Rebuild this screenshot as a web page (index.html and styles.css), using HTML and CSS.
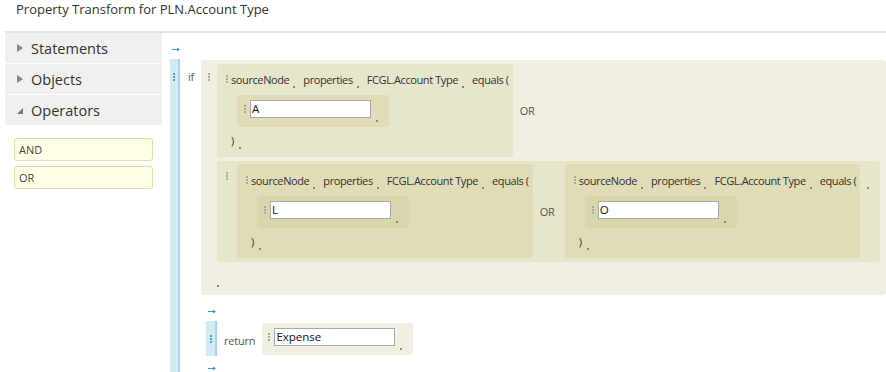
FILE: index.html
```html
<!DOCTYPE html>
<html>
<head>
<meta charset="utf-8">
<link rel="stylesheet" href="styles.css">
</head>
<body>
<div class="title">Property Transform for PLN.Account Type</div>
<div class="main">
  <aside class="side">
    <div class="cat"><span class="tri-r"></span>Statements</div>
    <div class="cat"><span class="tri-r"></span>Objects</div>
    <div class="cat"><span class="tri-d"></span>Operators</div>
    <div class="ops">
      <div class="op">AND</div>
      <div class="op">OR</div>
    </div>
  </aside>
  <section class="editor">
    <div class="arrow-row top"><svg class="arrow" width="8" height="5" viewBox="0 0 8 5"><path d="M0 2.5H6" stroke="#3a9bd5" stroke-width="1"/><path d="M5 0.5L8 2.5L5 4.5Z" fill="#3a9bd5"/></svg></div>
    <div class="if-stmt">
      <div class="bar"><span class="grip blue"></span></div>
      <div class="stmt-body">
        <div class="if-row">
          <span class="kw if">if</span>
          <div class="blk l1 or-outer">
            <span class="grip"></span>
            <div class="rows">
              <div class="row">
                <div class="blk l2 eq">
                  <span class="grip"></span>
                  <div class="eq-body">
                    <div class="line"><span class="tok">sourceNode</span><span class="dot"></span><span class="tok">properties</span><span class="dot"></span><span class="tok">FCGL.Account Type</span><span class="dot"></span><span class="tok last">equals (</span></div>
                    <div class="val l3"><span class="grip"></span><span class="input">A</span><span class="dot"></span></div>
                    <div class="line close"><span class="tok">)</span><span class="dot"></span></div>
                  </div>
                </div>
                <span class="kw or">OR</span>
              </div>
              <div class="blk l2 or-inner">
                <span class="grip"></span>
                <div class="blk l3 eq">
                  <span class="grip"></span>
                  <div class="eq-body">
                    <div class="line"><span class="tok">sourceNode</span><span class="dot"></span><span class="tok">properties</span><span class="dot"></span><span class="tok">FCGL.Account Type</span><span class="dot"></span><span class="tok last">equals (</span></div>
                    <div class="val l4"><span class="grip"></span><span class="input">L</span><span class="dot"></span></div>
                    <div class="line close"><span class="tok">)</span><span class="dot"></span></div>
                  </div>
                </div>
                <span class="kw or-mid">OR</span>
                <div class="blk l3 eq">
                  <span class="grip"></span>
                  <div class="eq-body">
                    <div class="line"><span class="tok">sourceNode</span><span class="dot"></span><span class="tok">properties</span><span class="dot"></span><span class="tok">FCGL.Account Type</span><span class="dot"></span><span class="tok last">equals (</span></div>
                    <div class="val l4"><span class="grip"></span><span class="input">O</span><span class="dot"></span></div>
                    <div class="line close"><span class="tok">)</span><span class="dot"></span></div>
                  </div>
                </div>
                <span class="dot end"></span>
              </div>
              <div class="tail"><span class="dot"></span></div>
            </div>
          </div>
        </div>
        <div class="then">
          <div class="arrow-row"><svg class="arrow" width="8" height="5" viewBox="0 0 8 5"><path d="M0 2.5H6" stroke="#3a9bd5" stroke-width="1"/><path d="M5 0.5L8 2.5L5 4.5Z" fill="#3a9bd5"/></svg></div>
          <div class="ret">
            <div class="rbar"><span class="grip blue"></span></div>
            <span class="kw rkw">return</span>
            <div class="val l1"><span class="grip"></span><span class="input">Expense</span><span class="dot"></span></div>
          </div>
          <div class="arrow-row after"><svg class="arrow" width="8" height="5" viewBox="0 0 8 5"><path d="M0 2.5H6" stroke="#3a9bd5" stroke-width="1"/><path d="M5 0.5L8 2.5L5 4.5Z" fill="#3a9bd5"/></svg></div>
        </div>
      </div>
    </div>
  </section>
</div>
</body>
</html>
```

FILE: styles.css
```css
html, body {
  margin: 0;
  padding: 0;
  background: #fff;
}
body {
  width: 886px;
  height: 372px;
  overflow: hidden;
  font-family: "Open Sans", "Noto Sans", sans-serif;
  color: #333;
}
.title {
  margin-left: 5px;
  padding-left: 11px;
  height: 31px;
  line-height: 18px;
  font-size: 13px;
  color: #333;
  border-bottom: 2px solid #e2e2e2;
}
.main {
  display: flex;
  align-items: flex-start;
}
.side {
  margin-left: 5px;
  width: 157px;
  flex: none;
}
.cat {
  height: 30px;
  border-bottom: 1px solid #fff;
  background: #f0f0f0;
  display: flex;
  align-items: center;
  padding-left: 12px;
  font-size: 14.5px;
  color: #333;
}
.tri-r {
  width: 0;
  height: 0;
  border-top: 4px solid transparent;
  border-bottom: 4px solid transparent;
  border-left: 6px solid #888;
  margin-right: 8px;
}
.tri-d {
  width: 0;
  height: 0;
  border-left: 6px solid transparent;
  border-bottom: 6px solid #777;
  margin-right: 8px;
  margin-top: 2px;
}
.ops {
  margin-top: 12px;
  margin-left: 9px;
  display: flex;
  flex-direction: column;
  gap: 5px;
}
.op {
  width: 139px;
  height: 23px;
  box-sizing: border-box;
  border: 1px solid #e0dca6;
  border-radius: 3px;
  background: #ffffe8;
  font-size: 11px;
  line-height: 21px;
  padding-left: 4px;
  color: #444;
}
.editor {
  flex: 1;
  min-width: 0;
  padding-left: 8px;
}
.arrow-row {
  height: 26px;
  box-sizing: border-box;
  padding-top: 14px;
  padding-left: 2px;
}
.arrow {
  display: block;
}
.if-stmt {
  display: flex;
  min-height: 330px;
}
.bar {
  width: 8px;
  flex: none;
  background: #d4eaf3;
  border-right: 2px solid #a6d6ee;
  padding-top: 14px;
  display: flex;
  flex-direction: column;
  align-items: center;
}
.stmt-body {
  flex: 1;
  min-width: 0;
  padding-left: 8px;
  padding-top: 1px;
}
.if-row {
  display: flex;
  align-items: flex-start;
}
.kw {
  font-size: 11px;
  color: #555;
  letter-spacing: -0.2px;
}
.kw.if {
  margin-top: 9px;
  width: 13px;
}
.grip {
  display: block;
  flex: none;
  width: 2px;
  height: 8px;
  background: radial-gradient(circle at 1px 1px, #aaa 0.8px, transparent 1.1px) 0 0 / 2px 3px repeat-y;
}
.grip.blue {
  background: radial-gradient(circle at 1px 1px, #4aa3d4 0.8px, transparent 1.1px) 0 0 / 2px 3px repeat-y;
}
.dot {
  display: block;
  flex: none;
  width: 2px;
  height: 2px;
  background: #888;
}
.blk {
  display: flex;
  align-items: flex-start;
  border-radius: 3px;
}
.l1 { background: #f1efe1; }
.l2 { background: #e7e5ca; }
.l3 { background: #dfdcb7; }
.l4 { background: #d9d6ac; }

.or-outer {
  flex: 1;
  min-width: 0;
  padding: 4px 0 0 7px;
}
.or-outer > .grip {
  margin-top: 9px;
  margin-right: 7px;
}
.rows {
  display: flex;
  flex-direction: column;
  align-items: flex-start;
  gap: 4px;
}
.row {
  display: flex;
  align-items: center;
}
.kw.or {
  margin-left: 7px;
}
.tail {
  height: 29px;
  box-sizing: border-box;
  padding-top: 19px;
}
.eq {
  padding: 7px 4px 9px 9px;
}
.or-inner .eq {
  padding-top: 8px;
}
.eq > .grip {
  margin-top: 4px;
  margin-right: 3px;
}
.eq-body {
  display: flex;
  flex-direction: column;
  align-items: flex-start;
}
.line {
  display: flex;
  height: 16px;
  align-items: center;
}
.line .dot {
  align-self: flex-end;
  margin-bottom: -1px;
  margin-right: 8px;
}
.tok {
  font-size: 11px;
  color: #333;
  letter-spacing: -0.4px;
  margin-right: 4px;
  white-space: nowrap;
}
.tok.last {
  margin-right: 0;
}
.line.close {
  margin-top: 5px;
}
.line.close .tok {
  margin-right: 5px;
}
.val {
  display: flex;
  align-items: flex-start;
  border-radius: 3px;
  padding: 5px 11px 9px 7px;
}
.eq-body .val {
  margin-top: 8px;
  margin-left: 6px;
}
.val > .grip {
  margin-top: 5px;
  margin-right: 4px;
}
.input {
  display: block;
  width: 121px;
  height: 18px;
  box-sizing: border-box;
  border: 1px solid #a9a9a9;
  background: #fff;
  font-size: 11.5px;
  line-height: 16px;
  padding-left: 1px;
  color: #111;
}
.val > .dot {
  margin-left: 5px;
  margin-top: 20px;
  margin-bottom: -4px;
}
.or-inner {
  padding: 3px 11px 4px 9px;
  align-items: flex-start;
}
.or-inner > .grip {
  margin-top: 8px;
  margin-right: 9px;
}
.kw.or-mid {
  align-self: center;
  margin: 0 10px 0 7px;
}
.dot.end {
  margin-left: 7px;
  margin-top: 23px;
}
.then {
  padding-left: 18px;
}
.arrow-row.after {
  height: 16px;
  padding-top: 10px;
}
.ret {
  display: flex;
  align-items: center;
  height: 35px;
}
.rbar {
  align-self: stretch;
  width: 9px;
  background: #d4eaf3;
  border-right: 2px solid #a6d6ee;
  display: flex;
  align-items: center;
  justify-content: center;
}
.kw.rkw {
  margin-left: 7px;
  margin-right: 7px;
  margin-top: 3px;
}
.ret .val {
  margin-top: 1px;
  padding-left: 6px;
}
```
